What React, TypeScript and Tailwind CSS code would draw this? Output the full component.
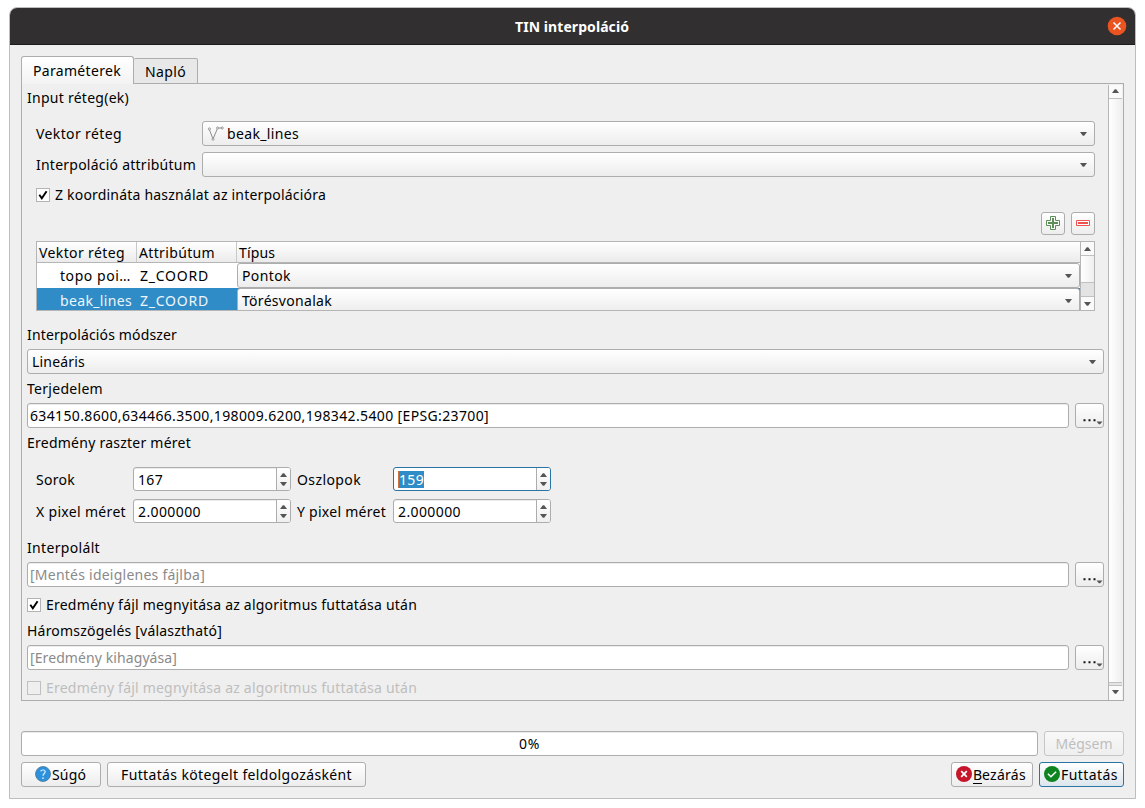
import { useLayoutEffect, useRef, useState, type ReactNode } from "react";

/* Text run spaced so that it takes a given width. */
function T({ w, children, className = "" }: { w: number; children: string; className?: string }) {
  const ref = useRef<HTMLSpanElement>(null);
  const [ls, setLs] = useState(0);
  useLayoutEffect(() => {
    const el = ref.current;
    if (!el) return;
    el.style.letterSpacing = "0px";
    setLs((w - el.getBoundingClientRect().width) / children.length);
  }, [w, children]);
  return (
    <span ref={ref} className={`inline-block shrink-0 whitespace-pre ${className}`} style={{ letterSpacing: `${ls}px` }}>
      {children}
    </span>
  );
}

const face = "border border-[#adadad] bg-linear-to-b from-white to-[#ededed]";

function Arrow({ up = false }: { up?: boolean }) {
  return (
    <svg width="7" height="4" viewBox="0 0 8 4" preserveAspectRatio="none" className="block shrink-0">
      <path d={up ? "M0 4L3.2 .3h1.6L8 4z" : "M0 0L3.2 3.7h1.6L8 0z"} fill="#555" />
    </svg>
  );
}

function Combo({ children, className = "" }: { children?: ReactNode; className?: string }) {
  return (
    <div className={`flex h-[25px] items-center justify-between rounded-[3px] pr-[7px] pl-1 ${face} ${className}`}>
      <div className="flex items-center">{children}</div>
      <Arrow />
    </div>
  );
}

function Field({ children, className = "" }: { children: ReactNode; className?: string }) {
  return (
    <div className={`flex h-[25px] w-[1042px] items-center rounded-[3px] border border-[#adadad] bg-white pl-[2px] shadow-[inset_0_1px_0_#ececec] ${className}`}>
      {children}
    </div>
  );
}

function Dots() {
  return (
    <button className={`h-[25px] w-[29px] rounded-[3px] ${face}`}>
      <svg width="27" height="23" className="block">
        <path d="M7.5 15.3h2v2h-2zM12.5 15.3h2v2h-2zM17.5 15.3h2v2h-2z" fill="#111" />
        <path d="M20.5 17.5h6l-2.4 2.8h-1.2z" fill="#555" />
      </svg>
    </button>
  );
}

function Check({ checked = false, disabled = false }: { checked?: boolean; disabled?: boolean }) {
  return (
    <span className={`mb-px flex size-[14px] shrink-0 border ${disabled ? "border-[#c0c0c0] bg-[#efefef]" : "border-[#b4b4b4] bg-white"}`}>
      {checked && (
        <svg width="12" height="12" viewBox="0 0 12 12">
          <path d="M2.3 5.8L4.8 9.3L9.6 2.2" fill="none" stroke="#000" strokeWidth="1.9" />
        </svg>
      )}
    </span>
  );
}

function Spin({ children, focus = false }: { children: ReactNode; focus?: boolean }) {
  return (
    <div className={`flex h-6 w-[158px] rounded-[3px] border bg-white ${focus ? "border-[#2b73a4]" : "border-[#adadad] shadow-[inset_0_1px_0_#ececec]"}`}>
      <div className="flex flex-1 items-center pl-1">{children}</div>
      <div className="flex w-[14px] flex-col items-center justify-between rounded-r-[2px] border-l border-[#adadad] bg-linear-to-b from-white to-[#efefef] pt-[5px] pb-1">
        <Arrow up />
        <Arrow />
      </div>
    </div>
  );
}

function Label({ w, children }: { w: number; children: string }) {
  return (
    <div className="flex h-5 items-center">
      <T w={w}>{children}</T>
    </div>
  );
}

function TableRow({ name, nameW, type, typeW, selected = false }: { name: string; nameW: number; type: string; typeW: number; selected?: boolean }) {
  return (
    <div className={`flex h-[25px] ${selected ? "bg-[#308cc6] text-[#eef5fa]" : "bg-white"}`}>
      <div className="flex w-[100px] items-center pl-[23px]"><T w={nameW}>{name}</T></div>
      <div className="flex w-[100px] items-center pl-[3px]"><T w={69}>Z_COORD</T></div>
      <Combo className="w-[843px] text-black">
        <T w={typeW}>{type}</T>
      </Combo>
    </div>
  );
}

export default function App() {
  return (
    <div className="h-[808px] w-[1145px] overflow-hidden bg-white pt-[7px] pl-[9px] font-['Noto_Sans','Open_Sans',sans-serif] text-[14px] leading-5 text-black">
      <div className="flex h-[792px] w-[1127px] flex-col rounded-t-[8px] border border-[#bdbdbd] bg-[#efefef]">
        <header className="flex h-[37px] shrink-0 items-center rounded-t-[7px] border-b border-[#1d1b1c] bg-[#322f30] pr-[8px] text-white">
          <div className="flex flex-1 justify-center pt-px pl-[27px]"><T w={114} className="font-bold">TIN interpoláció</T></div>
          <svg width="20" height="20" viewBox="0 0 20 20">
            <circle cx="10" cy="10" r="9.3" fill="#e95420" />
            <path d="M6.5 6.5l7 7M13.5 6.5l-7 7" stroke="#fff" strokeWidth="1.5" />
          </svg>
        </header>

        <div className="flex flex-1 flex-col px-[11px] pt-[11px]">
          <div className="z-10 -mb-px flex h-[28px] items-end">
            <div className="flex h-[28px] w-[113px] items-center rounded-t-[3px] border border-b-0 border-[#adadad] bg-linear-to-b from-white to-[#f3f3f3] pt-px pl-[11px]"><T w={88}>Paraméterek</T></div>
            <div className="flex h-[26px] w-[64px] items-center rounded-t-[2px] border border-l-0 border-[#adadad] bg-[#e8e8e8] pt-[2px] pl-[11px]"><T w={41}>Napló</T></div>
          </div>

          <div className="flex h-[618px] w-[1103px] border border-[#adadad] pt-px pr-px">
            <div className="flex flex-1 flex-col pl-[5px]">
              <div className="h-[23px] pt-[3px]"><Label w={102}>Input réteg(ek)</Label></div>

              <div className="flex w-[1068px] flex-col pt-[13px] pl-[9px]">
                <div className="flex h-[25px] items-center">
                  <div className="w-[166px]"><Label w={86}>Vektor réteg</Label></div>
                  <Combo className="w-[893px]">
                    <svg width="17" height="16" viewBox="0 0 17 16" className="mr-[3px]" fill="none" stroke="#8c8c8c">
                      <path d="M2.5 4L6 13L10.2 3.2M11.6 2H15" />
                      <g fill="#eee" strokeWidth=".8"><circle cx="2.4" cy="2.9" r="1.1" /><circle cx="6" cy="13.2" r="1.1" /><circle cx="10.6" cy="2" r="1.1" /><circle cx="15.2" cy="2" r="1.1" /></g>
                    </svg>
                    <T w={72}>beak_lines</T>
                  </Combo>
                </div>
                <div className="mt-[6px] flex h-[25px] items-center">
                  <div className="w-[166px]"><Label w={160}>Interpoláció attribútum</Label></div>
                  <Combo className="w-[893px]" />
                </div>
                <div className="mt-2 flex h-5 items-center gap-[5px]"><Check checked /><T w={271}>Z koordináta használat az interpolációra</T></div>
                <div className="mt-[7px] flex h-[23px] justify-end gap-[6px]">
                  <button className={`flex h-[23px] w-6 items-center justify-center rounded-[3px] ${face}`}>
                    <svg width="16" height="16" viewBox="0 0 16 16" fill="none" stroke="#5b8f57" className="mb-px shrink-0">
                      <path d="M5.5 1.5h5v4h4v5h-4v4h-5v-4h-4v-5h4z" fill="#fff" />
                      <path d="M8 3v10M3 8h10" strokeWidth="2" />
                    </svg>
                  </button>
                  <button className={`flex h-[23px] w-6 items-center justify-center rounded-[3px] ${face}`}>
                    <svg width="16" height="16" viewBox="0 0 16 16" className="mb-px shrink-0">
                      <path d="M1.5 5.5h13v5h-13z" fill="#fff" stroke="#ef5050" /><path d="M3 7h10v2H3z" fill="#ef5050" />
                    </svg>
                  </button>
                </div>

                <div className="mt-[6px] flex h-[70px] w-[1059px] border border-[#b5b5b5]">
                  <div className="h-[68px] w-[1043px] overflow-hidden">
                    <div className="flex h-[21px] border-b border-[#b5b5b5] bg-linear-to-b from-white to-[#ebebeb]">
                      <div className="w-[100px] border-r border-[#c8c8c8] pt-px pl-[2px] leading-[19px]"><T w={86}>Vektor réteg</T></div>
                      <div className="w-[100px] border-r border-[#c8c8c8] pt-px pl-[2px] leading-[19px]"><T w={76}>Attribútum</T></div>
                      <div className="pt-px pl-[2px] leading-[19px]"><T w={36}>Típus</T></div>
                    </div>
                    <TableRow name="topo poi…" nameW={71} type="Pontok" typeW={49} />
                    <TableRow name="beak_lines" nameW={72} type="Törésvonalak" typeW={90} selected />
                  </div>
                  <div className="flex w-[14px] flex-col border-l border-[#b5b5b5] bg-[#e3e3e3]">
                    <div className="flex h-[14px] items-center justify-center border-b border-[#c0c0c0] bg-[#fafafa] pr-px"><Arrow up /></div>
                    <div className="h-[27px] border-b border-[#c0c0c0] bg-linear-to-r from-white to-[#efefef]" />
                    <div className="mt-auto flex h-[14px] items-center justify-center border-t border-[#c0c0c0] bg-[#fafafa] pr-px"><Arrow /></div>
                  </div>
                </div>
              </div>

              <div className="mt-[14px]"><Label w={150}>Interpolációs módszer</Label></div>
              <Combo className="mt-1 w-[1077px]"><T w={53}>Lineáris</T></Combo>
              <div className="mt-[5px]"><Label w={76}>Terjedelem</Label></div>
              <div className="mt-1 flex gap-[6px]">
                <Field><T w={459}>634150.8600,634466.3500,198009.6200,198342.5400 [EPSG:23700]</T></Field>
                <Dots />
              </div>
              <div className="mt-[5px]"><Label w={164}>Eredmény raszter méret</Label></div>

              <div className="mt-[14px] grid h-14 grid-cols-[97px_164px_96px_158px] content-between items-center pl-[9px]">
                <T w={39} className="justify-self-start pt-px">Sorok</T>
                <Spin><T w={25} className="pt-px">167</T></Spin>
                <T w={64} className="justify-self-start pt-px">Oszlopok</T>
                <Spin focus><span className="mt-px flex h-[17px] items-center border-l border-[#d0703a] bg-[#308cc6] text-white"><T w={25}>159</T></span></Spin>
                <T w={90} className="justify-self-start pt-px">X pixel méret</T>
                <Spin><T w={63} className="pt-px">2.000000</T></Spin>
                <T w={89} className="justify-self-start pt-px">Y pixel méret</T>
                <Spin><T w={63} className="pt-px">2.000000</T></Spin>
              </div>

              <div className="mt-[15px]"><Label w={73}>Interpolált</Label></div>
              <div className="mt-1 flex gap-[6px]">
                <Field className="text-[#8a8a8a]"><T w={175}>[Mentés ideiglenes fájlba]</T></Field>
                <Dots />
              </div>
              <div className="mt-2 flex h-5 items-center gap-[5px]"><Check checked /><T w={371}>Eredmény fájl megnyitása az algoritmus futtatása után</T></div>
              <div className="mt-[6px]"><Label w={195}>Háromszögelés [választható]</Label></div>
              <div className="mt-1 flex gap-[6px]">
                <Field className="text-[#8a8a8a]"><T w={147}>[Eredmény kihagyása]</T></Field>
                <Dots />
              </div>
              <div className="mt-2 flex h-5 items-center gap-[5px] text-[#bebebe]"><Check disabled /><T w={371}>Eredmény fájl megnyitása az algoritmus futtatása után</T></div>
            </div>

            <div className="flex w-[14px] flex-col border-l border-[#b5b5b5]">
              <div className="flex h-[14px] items-center justify-center border-b border-[#c0c0c0] bg-[#fafafa] pr-px pb-px"><Arrow up /></div>
              <div className="flex-1 bg-linear-to-r from-white to-[#efefef]" />
              <div className="h-1 border-y border-[#c0c0c0] bg-[#e3e3e3]" />
              <div className="flex h-[14px] items-center justify-center bg-[#fafafa] pr-px pb-[2px]"><Arrow /></div>
            </div>
          </div>

          <div className="mt-[30px] flex gap-[6px]">
            <div className="flex h-[25px] w-[1017px] items-center justify-center rounded-[3px] border border-[#adadad] bg-white shadow-[inset_0_1px_0_#ececec]"><T w={21}>0%</T></div>
            <button className="h-[25px] w-20 rounded-[3px] border border-[#c6c6c6] bg-linear-to-b from-[#f8f8f8] to-[#efefef] text-[#bebebe]"><T w={57}>Mégsem</T></button>
          </div>
          <div className="mt-[6px] flex h-[25px]">
            <button className={`flex w-20 items-center rounded-[3px] pl-[13px] ${face}`}>
              <svg width="16" height="16" viewBox="0 0 16 16" className="mr-[1px] mb-px">
                <circle cx="8" cy="8" r="7.5" fill="#2d91dc" stroke="#4b7898" strokeWidth=".8" />
                <path d="M5.7 5.4C6 3.5 10.2 3.4 10.2 5.8C10.2 7.5 8 7.6 8 9.8" fill="none" stroke="#d7efff" strokeWidth="1.2" />
                <circle cx="8" cy="12.1" r=".9" fill="#d7efff" />
              </svg>
              <T w={34}>Súgó</T>
            </button>
            <button className={`ml-[6px] flex w-[259px] items-center rounded-[3px] pl-[13px] ${face}`}><T w={231}>Futtatás kötegelt feldolgozásként</T></button>
            <button className={`ml-auto flex w-[82px] items-center rounded-[3px] pl-[4px] ${face}`}>
              <svg width="16" height="16" viewBox="0 0 16 16" className="mr-[1px] mb-px">
                <circle cx="8" cy="8" r="8" fill="#c7162b" />
                <path d="M5.2 5.2l5.6 5.6M10.8 5.2l-5.6 5.6" stroke="#fff" strokeWidth="1.7" />
              </svg>
              <T w={9} className="underline underline-offset-[3px]">B</T><T w={44}>ezárás</T>
            </button>
            <button className="ml-[6px] flex w-[85px] items-center rounded-[3px] border border-[#2b73a4] bg-linear-to-b from-white to-[#dce6ed] pl-[4px]">
              <svg width="16" height="16" viewBox="0 0 16 16" className="mr-[1px] mb-px">
                <circle cx="8" cy="8" r="8" fill="#0e8420" />
                <path d="M3.9 7.7l3 3l5.2-5" fill="none" stroke="#fff" strokeWidth="1.5" />
              </svg>
              <T w={57}>Futtatás</T>
            </button>
          </div>
        </div>
      </div>
    </div>
  );
}
